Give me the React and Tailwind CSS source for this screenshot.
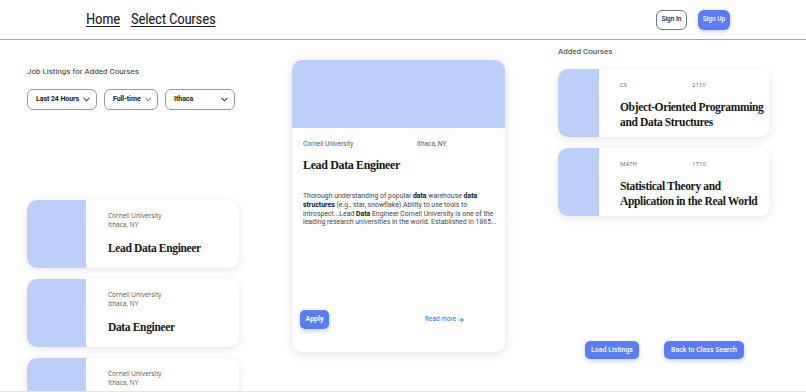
import React from "react";

const sans = { fontFamily: "Roboto, 'Liberation Sans', sans-serif" };
const open = { fontFamily: "'Open Sans', 'Liberation Sans', sans-serif" };
const serif = { fontFamily: "'Liberation Serif', 'DejaVu Serif', serif" };

function Chevron() {
  return (
    <svg width="7" height="5" viewBox="0 0 8 5" fill="none" stroke="#444" strokeWidth="1.2" strokeLinecap="round" strokeLinejoin="round">
      <path d="M1 1l3 3 3-3" />
    </svg>
  );
}

function Select({ label, w }) {
  return (
    <div className={`flex h-[21px] items-center justify-between gap-[4px] whitespace-nowrap rounded-[6px] border border-[#9a9a9a] pl-[8px] pr-[6px] text-[7px] font-bold tracking-[-0.01em] text-[#1a1a1a] ${w}`} style={sans}>
      <span>{label}</span>
      <Chevron />
    </div>
  );
}

function JobCard({ title }) {
  return (
    <div className="flex h-[68px] w-[212px] shrink-0 overflow-hidden rounded-[10px] bg-white shadow-[0_2px_9px_rgba(0,0,0,0.10)]">
      <div className="w-[59px] shrink-0 bg-[#bccffb]" />
      <div className="flex flex-col pl-[22px] pt-[11px]">
        <div className="text-[6.5px] leading-[9px] text-[#555]" style={open}>Cornell University</div>
        <div className="text-[6.5px] leading-[9px] text-[#555]" style={open}>Ithaca, NY</div>
        <div className="mt-[12px] whitespace-nowrap text-[11.5px] font-bold leading-[14px] tracking-[-0.03em] text-[#151515]" style={serif}>{title}</div>
      </div>
    </div>
  );
}

function CourseCard({ dept, num, title }) {
  return (
    <div className="flex h-[68px] w-[212px] shrink-0 overflow-hidden rounded-[10px] bg-white shadow-[0_2px_9px_rgba(0,0,0,0.10)]">
      <div className="w-[41px] shrink-0 bg-[#bccffb]" />
      <div className="flex flex-col pl-[21px] pt-[12px]">
        <div className="flex text-[6px] leading-[8px] text-[#666]" style={open}>
          <span className="w-[72px]">{dept}</span>
          <span>{num}</span>
        </div>
        <div className="mt-[11px] whitespace-nowrap text-[11.5px] font-bold leading-[14.5px] tracking-[-0.03em] text-[#151515]" style={serif}>{title}</div>
      </div>
    </div>
  );
}

export default function App() {
  return (
    <div className="h-[392px] w-[806px] overflow-hidden bg-white">
      <header className="flex h-[40px] items-center justify-between border-b border-[#a8a8a8] pl-[86px] pr-[76px]">
        <nav className="flex gap-[11px] text-[15px] tracking-[-0.02em] text-[#1a1a1a]" style={{ fontFamily: "'Liberation Sans Narrow', 'Roboto Condensed', Roboto, sans-serif" }}>
          <a className="underline underline-offset-[2px]">Home</a>
          <a className="underline underline-offset-[2px]">Select Courses</a>
        </nav>
        <div className="flex items-center gap-[11px]" style={sans}>
          <button className="h-[20px] w-[31px] rounded-[6px] border border-[#777] text-[6.5px] font-medium text-[#1a1a1a]">Sign In</button>
          <button className="h-[20px] w-[32px] rounded-[6px] bg-[#5a7cf7] text-[6.5px] font-medium text-white shadow-[0_2px_5px_rgba(90,124,247,0.35)]">Sign Up</button>
        </div>
      </header>

      <main className="flex h-[352px] gap-[53px] overflow-hidden border-b border-[#e5e5e5] pl-[27px]">
        <section className="flex w-[212px] shrink-0 flex-col pt-[27px]">
          <div className="text-[8px] leading-[10px] text-[#333]" style={sans}>Job Listings for Added Courses</div>
          <div className="mt-[12px] flex gap-[7px]">
            <Select label="Last 24 Hours" w="w-[70px]" />
            <Select label="Full-time" w="w-[54px]" />
            <Select label="Ithaca" w="w-[70px]" />
          </div>
          <div className="mt-[90px] flex flex-col gap-[11px]">
            <JobCard title="Lead Data Engineer" />
            <JobCard title="Data Engineer" />
            <JobCard title="Data Engineer" />
          </div>
        </section>

        <section className="w-[213px] shrink-0 pt-[20px]">
          <div className="flex h-[292px] flex-col overflow-hidden rounded-[10px] bg-white shadow-[0_2px_10px_rgba(0,0,0,0.12)]">
            <div className="h-[68px] shrink-0 bg-[#bccffb]" />
            <div className="flex flex-1 flex-col pl-[11px] pr-[6px] pt-[12px]">
              <div className="flex text-[6.5px] leading-[9px] text-[#555]" style={sans}>
                <span className="w-[114px]">Cornell University</span>
                <span>Ithaca, NY</span>
              </div>
              <div className="mt-[9px] whitespace-nowrap text-[12px] font-bold leading-[15px] tracking-[-0.03em] text-[#151515]" style={serif}>Lead Data Engineer</div>
              <p className="mt-[19px] text-[6.9px] leading-[8.8px] text-[#444]" style={sans}>
                Thorough understanding of popular <b className="text-[#111]">data</b> warehouse <b className="text-[#111]">data structures</b> (e.g., star, snowflake) Ability to use tools to introspect...Lead <b className="text-[#111]">Data</b> Engineer Cornell University is one of the leading research universities in the world. Established in 1865...
              </p>
              <div className="mt-auto mb-[23px] -ml-[3px] flex items-center">
                <button className="h-[19px] w-[29px] rounded-[5px] bg-[#5a7cf7] text-[7px] font-bold text-white shadow-[0_2px_5px_rgba(90,124,247,0.35)]" style={sans}>Apply</button>
                <span className="ml-[96px] flex items-center gap-[2px] text-[6.5px] text-[#3d63dd]" style={sans}>
                  Read more
                  <svg width="6" height="6" viewBox="0 0 10 10" fill="none" stroke="#3d63dd" strokeWidth="1.3" strokeLinecap="round" strokeLinejoin="round">
                    <path d="M1.5 5h7M5.5 2l3 3-3 3" />
                  </svg>
                </span>
              </div>
            </div>
          </div>
        </section>

        <section className="flex w-[212px] shrink-0 flex-col pt-[7px]">
          <div className="text-[8px] leading-[10px] text-[#333]" style={sans}>Added Courses</div>
          <div className="mt-[12px] flex flex-col gap-[11px]">
            <CourseCard dept="CS" num="2110" title={<>Object-Oriented Programming<br />and Data Structures</>} />
            <CourseCard dept="MATH" num="1710" title={<>Statistical Theory and<br />Application in the Real World</>} />
          </div>
          <div className="mt-[125px] flex gap-[25px] pl-[27px]" style={sans}>
            <button className="h-[18px] w-[54px] rounded-[5px] bg-[#5a7cf7] text-[7px] font-medium text-white shadow-[0_2px_5px_rgba(90,124,247,0.35)]">Load Listings</button>
            <button className="h-[18px] w-[80px] rounded-[5px] bg-[#5a7cf7] text-[7px] font-medium text-white shadow-[0_2px_5px_rgba(90,124,247,0.35)]">Back to Class Search</button>
          </div>
        </section>
      </main>
    </div>
  );
}
